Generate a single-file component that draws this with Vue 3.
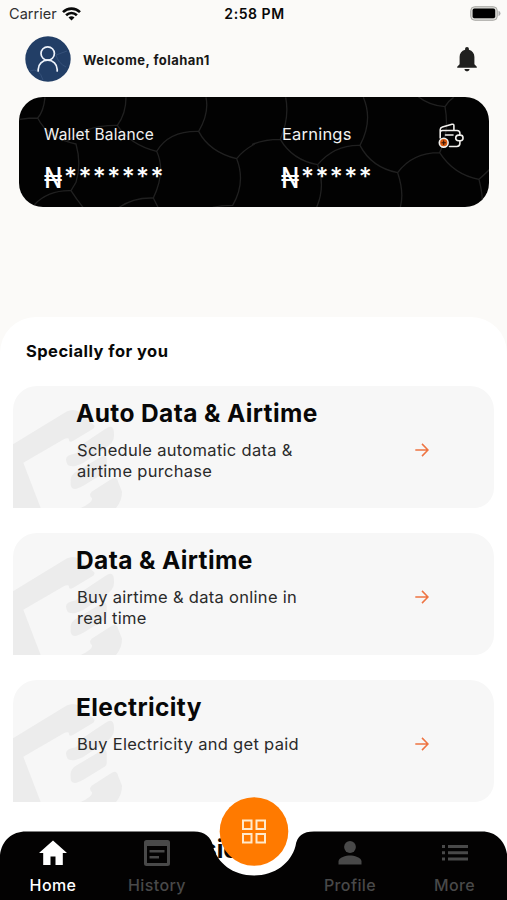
<script setup>
const offers = [
  { title: 'Auto Data & Airtime', lines: ['Schedule automatic data &', 'airtime purchase'] },
  { title: 'Data & Airtime', lines: ['Buy airtime & data online in', 'real time'] },
  { title: 'Electricity', lines: ['Buy Electricity and get paid'] },
]
</script>

<template>
  <div class="screen">
    <div class="status">
      <div class="carrier">
        <span>Carrier</span>
        <svg width="19" height="14" viewBox="0 0 19 14" fill="none" stroke="#090909" stroke-width="2.6">
          <path d="M1 5.1C5.8.4 13.2.4 18 5.1" />
          <path d="M4.1 8.3c3.1-3 7.7-3 10.8 0" />
          <path d="M9.5 13.5 6.5 10.5c1.7-1.6 4.3-1.6 6 0Z" fill="#090909" stroke="none" />
        </svg>
      </div>
      <span class="time">2:58 PM</span>
      <svg class="battery" width="31" height="15" viewBox="0 0 31 15">
        <rect x=".7" y=".7" width="26.6" height="13.6" rx="4" fill="#d8d8d4" stroke="#a9a9a5" />
        <rect x="2.6" y="2.6" width="22.6" height="9.6" rx="1.8" fill="#000" />
        <path d="M28.5 4.8q2 .8 2 2.7t-2 2.7Z" fill="#aaa" />
      </svg>
    </div>

    <header class="header">
      <svg class="avatar" width="46" height="46" viewBox="0 0 46 46">
        <circle cx="23" cy="23" r="22.7" fill="#223e66" />
        <path d="M5 35q9-4 13 9M31 19l11-4M31 19q2 8 10 12" fill="none" stroke="#35517a" />
        <g fill="none" stroke="#eef3fb" stroke-width="1.7" stroke-linecap="round">
          <circle cx="22.7" cy="17.5" r="6.7" />
          <path d="M13.2 35v-1.600c0-5.200 4.200-9.200 9.500-9.200s9.500 4 9.500 9.200V35" />
        </g>
      </svg>
      <span class="welcome">Welcome, folahan1</span>
      <svg class="bell" width="20" height="25" viewBox="0 0 20 25" fill="#20201f">
        <path d="M10 0c1.2 0 1.9.8 1.9 1.9v.8c3.6.9 5.5 3.7 5.5 7.3v7.2l2.4 2.6v1H.2v-1l2.4-2.6V10c0-3.6 1.9-6.4 5.500-7.300v-.8C8.100.8 8.800 0 10 0Z" />
        <path d="M7.5 22.1h5c0 1.3-1.1 2.3-2.5 2.3s-2.5-1-2.5-2.3Z" />
      </svg>
    </header>

    <section class="wallet">
      <svg class="cells" viewBox="0 0 470 110" fill="none" stroke="#202020" stroke-width="4">
        <g transform="translate(-19 -7) scale(.33333)">
          <path d="M135 22q-4 42-22 62q-25 0-55 4M113 84q30 60 115 78q17 60 0 115l-15 25q-68-2-110 42M213 302q16 25 36 50M378 22q0 50-26 84q-92-2-150 48M352 106q38 58 118 78q28 60-10 140q-62-2-105 30M460 324l14 28M470 184q36-62 126-60q32-54 22-102M596 124q32 62 114 82q28 70-12 140q-34 0-60 6M710 206q18-24 54-44" />
        </g>
        <g transform="translate(234 -7) scale(.33333)">
          <path d="M98 22q12 60-16 126q-50 0-85 16M82 148q36 62 112 76q24 64-3 128M194 224q50-60 127-58q40-74 10-144M321 166q34 66 113 82q20 60 8 104M434 248q44-60 126-60q30-60 16-138q-48-4-80-30M576 50q10-18 26-28M560 188q42 66 118 80q18-16 40-38M678 268q10 40 10 64" />
        </g>
      </svg>
      <div class="balance">
        <span class="label">Wallet Balance</span>
        <div class="amount"><span class="naira">₦</span><span class="stars">*******</span></div>
      </div>
      <div class="earnings">
        <span class="label earn-label">Earnings</span>
        <div class="amount"><span class="naira">₦</span><span class="stars">*****</span></div>
      </div>
      <svg class="wallet-icon" width="26" height="26" viewBox="0 0 26 26" fill="none" stroke="#f1efec" stroke-width="1.6" stroke-linejoin="round" stroke-linecap="round">
        <path d="M2.200 15V9.500C2.200 8 3.300 7.500 4.700 7.500H19c2 0 2.900 1 2.900 2.700v1.600M21.900 18v2.300c0 2-1.300 3.200-3.200 3.200H11.500M2.200 9.500V6.800c0-1.500.8-2.300 2.200-2.700L14 1.300c1.200-.3 1.900.2 1.900 1.400v4.600M7.500 12h7.500M22.500 12.100h-1.800c-4 .3-4 5.400 0 5.700h1.800c3.400-.3 3.400-5.400 0-5.700Z" />
        <circle cx="5.7" cy="19.7" r="4.4" fill="#d9580d" />
        <path d="M5.700 17.900v3.600M3.900 19.700h3.600" stroke="#321307" stroke-width="1.1" />
      </svg>
    </section>

    <main class="sheet">
      <h2 class="section-title">Specially for you</h2>
      <article v-for="offer in offers" :key="offer.title" class="card">
        <svg class="hand" width="112" height="122" viewBox="0 0 112 122">
          <g fill="#ececec" transform="translate(-13 -10.5) scale(.33333)">
            <path d="M38 207 200 108Q230 94 250 122L281 148Q288 155 275 163L220 196Q205 204 207 190 200 185 185 195L70 262 123 400H38Z" />
            <path d="M232 216 318 159Q344 142 342 182 342 202 311 222L248 263Q199 286 198 252 197 238 226 234 238 228 232 216Z" />
            <path d="M301 245Q320 234 320 252V282Q320 289 305 297L250 331Q209 354 212 320 209 298 234 285Z" />
            <path d="M332 312Q349 299 354 318L366 348Q367 377 346 400H236Q280 381 276 368 264 358 276 348Z" />
          </g>
        </svg>
        <div class="copy">
          <h3>{{ offer.title }}</h3>
          <p><span v-for="line in offer.lines" :key="line">{{ line }}</span></p>
        </div>
        <svg class="arrow" width="14" height="14" viewBox="0 0 14 14" fill="none" stroke="#ee7442" stroke-width="1.5">
          <path d="M.3 7h12.5M7 .9 13 7l-6 6.1" />
        </svg>
      </article>
      <h3 class="peek">sic</h3>
    </main>

    <nav class="nav">
      <svg class="nav-shape" width="507" height="103" viewBox="0 0 507 103">
        <path d="M0 103V58C2 43 12 34.500 26 34.500H194C205 34.500 211 40 213 49 217 66 233 78.500 254 78.500S291 66 295.500 49C297 39 303 34.500 314 34.500H482C496 34.500 505 44 507 57V103Z" fill="#030202" />
        <circle cx="254" cy="34.5" r="34.3" fill="#ff7a00" />
        <g fill="none" stroke="#ffe9cc" stroke-width="2">
          <path d="M243 23.500h8.500v8.500H243ZM256.500 23.500h8.500v8.500h-8.500ZM243 37h8.500v8.500H243ZM256.500 37h8.500v8.500h-8.500Z" />
        </g>
      </svg>
      <div class="tab home">
        <svg width="30" height="28" viewBox="0 0 30 28" fill="#fff"><path d="M15 1.500 1 14h4.200v12h7.300v-8.500h5V26h7.300V14H29Z" /></svg>
        <span>Home</span>
      </div>
      <div class="tab history">
        <svg width="28" height="28" viewBox="0 0 28 28"><path fill="#494949" fill-rule="evenodd" d="M3.500 1h21q2.500 0 2.500 2.500v21q0 2.500-2.500 2.500h-21Q1 27 1 24.500v-21Q1 1 3.500 1ZM4 7v17h20V7ZM6.500 11h15v2.500h-15ZM6.500 17H16v2.500H6.500Z" /></svg>
        <span>History</span>
      </div>
      <div class="tab profile">
        <svg width="28" height="28" viewBox="0 0 28 28" fill="#494949"><circle cx="14" cy="8" r="5.9" /><path d="M2.500 25.500v-3c0-3.900 7.700-5.900 11.500-5.900s11.500 2 11.500 5.900v3Z" /></svg>
        <span>Profile</span>
      </div>
      <div class="tab more">
        <svg width="28" height="28" viewBox="0 0 28 28" fill="#494949"><path d="M1 6h3v3H1ZM7 6h20v3H7ZM1 12.200h3v3H1ZM7 12.200h20v3H7ZM1 18.400h3v3H1ZM7 18.400h20v3H7Z" /></svg>
        <span>More</span>
      </div>
    </nav>
  </div>
</template>

<style>
body { margin: 0; background: #fbfaf8; }
</style>

<style scoped>
.screen {
  position: relative;
  width: 507px;
  height: 900px;
  overflow: hidden;
  background: #fbfaf8;
  color: #080808;
  font-family: Inter, "Liberation Sans", sans-serif;
}
.status {
  display: grid;
  grid-template-columns: 1fr auto 1fr;
  align-items: center;
  height: 27px;
  padding: 0 6px 0 9px;
  box-sizing: border-box;
}
.carrier { display: flex; align-items: center; gap: 5px; font-size: 14.5px; color: #303030; letter-spacing: .05px; }
.time { margin-right: 1px; font-size: 14px; font-weight: 600; letter-spacing: .55px; }
.battery { justify-self: end; }
.header { display: flex; align-items: center; height: 64px; padding: 0 30px 0 25px; }
.welcome { margin: 2px 0 0 12px; font-size: 13px; font-weight: 700; letter-spacing: .45px; color: #171717; }
.bell { margin-left: auto; }
.wallet {
  position: relative;
  display: grid;
  grid-template-columns: 238px 156px 1fr;
  box-sizing: border-box;
  width: 470px;
  height: 110px;
  margin: 6px 0 0 19px;
  padding: 26px 0 0 25px;
  border-radius: 24px;
  overflow: hidden;
  background: #020202;
  color: #f2f2f2;
}
.cells { position: absolute; inset: 0; width: 470px; height: 110px; }
.balance, .earnings, .wallet-icon { position: relative; }
.label { display: block; font-size: 15.5px; line-height: 23px; letter-spacing: .18px; }
.earn-label { font-size: 16.5px; letter-spacing: .2px; }
.amount { display: flex; align-items: flex-start; padding-top: 10px; color: #fff; }
.naira { width: 20px; font-size: 28px; line-height: 44px; font-weight: 500; transform: scaleX(.85); transform-origin: left; }
.stars { font-size: 25px; line-height: 42px; font-weight: 500; letter-spacing: 1.4px; }
.earnings .amount { margin-left: -1px; }
.sheet {
  height: 583px;
  margin-top: 110px;
  padding: 0 13px;
  border-radius: 36px 36px 0 0;
  background: #fff;
}
.section-title { margin: 0; padding: 23px 0 0 13px; height: 46px; font-size: 16.5px; line-height: 22px; font-weight: 700; letter-spacing: .45px; }
.card {
  position: relative;
  display: flex;
  box-sizing: border-box;
  height: 122px;
  margin-bottom: 25px;
  padding: 11px 65px 0 64px;
  border-radius: 24px 24px 20px 0;
  overflow: hidden;
  background: #f7f7f7;
}
.hand { position: absolute; left: 0; top: 0; }
.copy { position: relative; flex: 1; }
.copy h3 { margin: 0 0 0 -1px; font-size: 24.5px; line-height: 33px; font-weight: 700; letter-spacing: .38px; white-space: nowrap; }
.copy p { margin: 10px 0 0; font-size: 16.5px; line-height: 21px; letter-spacing: .3px; color: #2a2a2a; }
.copy span { display: block; }
.arrow { margin-top: 46px; }
.peek { margin: 31px 0 0 190px; font-size: 24.5px; line-height: 33px; }
.nav {
  position: absolute;
  left: 0;
  right: 0;
  bottom: 0;
  display: grid;
  grid-template-columns: 106px 102px 90px 104px 105px;
  height: 103px;
}
.nav-shape { position: absolute; inset: 0; }
.tab { position: relative; display: flex; flex-direction: column; align-items: center; gap: 8px; padding-top: 42px; font-size: 16px; line-height: 20px; font-weight: 500; letter-spacing: .4px; color: #494949; }
.home { color: #fff; }
.profile { grid-column: 4; }
</style>
